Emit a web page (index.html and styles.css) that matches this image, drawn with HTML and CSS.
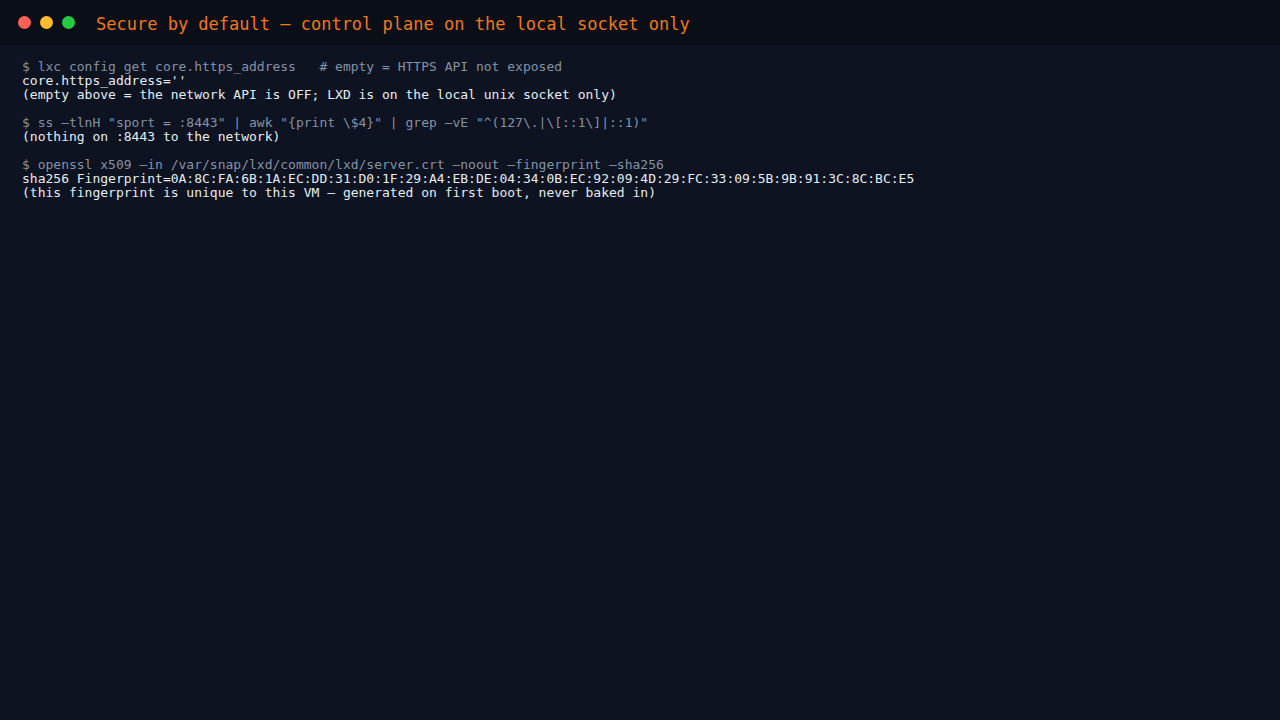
FILE: index.html
```html
<!DOCTYPE html>
<html>
<head>
<meta charset="utf-8">
<link rel="stylesheet" href="styles.css">
</head>
<body>
<div class="window">
  <header class="titlebar">
    <div class="dots">
      <span class="dot red"></span>
      <span class="dot yellow"></span>
      <span class="dot green"></span>
    </div>
    <h1 class="title">Secure by default — control plane on the local socket only</h1>
  </header>
  <pre class="term"><span class="cmd">$ lxc config get core.https_address   # empty = HTTPS API not exposed</span>
<span class="out">core.https_address=''</span>
<span class="out">(empty above = the network API is OFF; LXD is on the local unix socket only)</span>

<span class="cmd">$ ss –tlnH "sport = :8443" | awk "{print \$4}" | grep –vE "^(127\.|\[::1\]|::1)"</span>
<span class="out">(nothing on :8443 to the network)</span>

<span class="cmd">$ openssl x509 –in /var/snap/lxd/common/lxd/server.crt –noout –fingerprint –sha256</span>
<span class="out">sha256 Fingerprint=0A:8C:FA:6B:1A:EC:DD:31:D0:1F:29:A4:EB:DE:04:34:0B:EC:92:09:4D:29:FC:33:09:5B:9B:91:3C:8C:BC:E5</span>
<span class="out">(this fingerprint is unique to this VM — generated on first boot, never baked in)</span></pre>
</div>
</body>
</html>
```
FILE: styles.css
```css
html, body {
  margin: 0;
  padding: 0;
  background: #0d1320;
  height: 100%;
}
.window {
  min-height: 100%;
  display: flex;
  flex-direction: column;
}
.titlebar {
  height: 45px;
  background: #0a0e17;
  display: flex;
  align-items: center;
  padding-left: 18px;
  box-sizing: border-box;
}
.dots {
  display: flex;
  gap: 9px;
}
.dot {
  width: 13px;
  height: 13px;
  border-radius: 50%;
  display: block;
}
.red { background: #ff5f57; }
.yellow { background: #febc2e; }
.green { background: #28c840; }
.title {
  margin: 3px 0 0 21px;
  font-family: "DejaVu Sans Mono", monospace;
  font-weight: normal;
  font-size: 17px;
  color: #f0771c;
  line-height: 1;
}
.term {
  margin: 0;
  padding: 15px 22px;
  font-family: "DejaVu Sans Mono", monospace;
  font-size: 13px;
  line-height: 14px;
  color: #e6edf3;
}
.cmd { color: #8592a6; }
.out { color: #e6edf3; }
```
